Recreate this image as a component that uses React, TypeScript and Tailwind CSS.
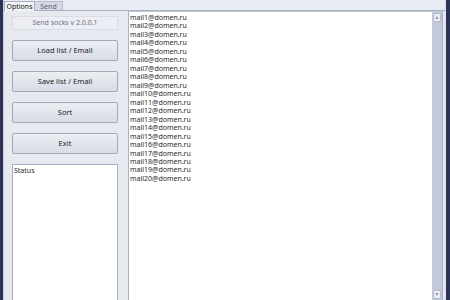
const emails = Array.from({ length: 20 }, (_, i) => `mail${i + 1}@domen.ru`);

const buttons = ['Load list / Email', 'Save list / Email', 'Sort', 'Exit'];

function ScrollArrow({ up }: { up: boolean }) {
  return (
    <div className="h-[9px] w-[8px] mx-auto rounded-[1px] border border-[#b4b9cb] bg-[#eef0f5] flex items-center justify-center">
      <svg width="4" height="3" viewBox="0 0 4 3">
        <path d={up ? 'M0 3 L2 0 L4 3 Z' : 'M0 0 L2 3 L4 0 Z'} fill="#9aa0b4" />
      </svg>
    </div>
  );
}

export default function App() {
  return (
    <div
      className="w-[450px] h-[300px] flex overflow-hidden bg-[#e9ecf2] text-[7px] text-[#2a2a2a]"
      style={{ fontFamily: '"Noto Sans", "Open Sans", sans-serif' }}
    >
      {/* window frame left */}
      <div className="w-[3px] shrink-0 bg-[#2b3356]" />
      <div className="w-[1px] shrink-0 bg-[#c8cde0]" />

      <div className="flex-1 flex flex-col min-w-0">
        {/* tabs */}
        <div className="h-[10px] shrink-0 flex items-end">
          <div className="h-[10px] w-[31px] border border-b-0 border-[#a7afc4] bg-[#f4f5f8] text-[#111] flex items-center justify-center leading-none -mb-px relative z-10">
            Options
          </div>
          <div className="h-[9px] w-[28px] border border-l-0 border-b-0 border-[#b5bccd] bg-[#d6dae6] text-[#5a6073] flex items-center justify-center leading-none">
            Send
          </div>
        </div>

        {/* tab page */}
        <div className="flex-1 flex min-h-0 border-t border-[#a7afc4] bg-[#e6e9f0] pl-[8px] pr-[2px]">
          <div className="w-[106px] shrink-0 flex flex-col pt-[5px]">
            <div className="h-[14px] border border-[#d9dce5] bg-[#eceef3] text-[#6e7283] flex items-center justify-center">
              Send socks v 2.0.0.1
            </div>
            <div className="flex flex-col gap-[10px] mt-[10px]">
              {buttons.map((b) => (
                <div
                  key={b}
                  className="h-[21px] rounded-[2px] border border-[#a2a9bb] bg-gradient-to-b from-[#eceef3] to-[#d8dce6] flex items-center justify-center text-[7.5px] text-[#222]"
                >
                  {b}
                </div>
              ))}
            </div>
            <div className="flex-1 mt-[10px] border border-[#a7afc4] border-b-0 bg-white px-[1px] pt-[1px]">
              Status
            </div>
          </div>

          <div className="flex-1 ml-[10px] flex border border-[#a7afc4] border-t-[#c4c9d8] border-b-0 bg-white min-w-0">
            <div className="flex-1 pl-[1px] pt-[2px] leading-[8.47px]">
              {emails.map((e) => (
                <div key={e}>{e}</div>
              ))}
            </div>
            <div className="w-[10px] shrink-0 bg-[#c5c9da] flex flex-col justify-between py-[1px]">
              <ScrollArrow up />
              <ScrollArrow up={false} />
            </div>
          </div>
        </div>
      </div>

      {/* window frame right */}
      <div className="w-[1px] shrink-0 bg-[#dfe3ee]" />
      <div className="w-[4px] shrink-0 bg-[#2b3356]" />
    </div>
  );
}
